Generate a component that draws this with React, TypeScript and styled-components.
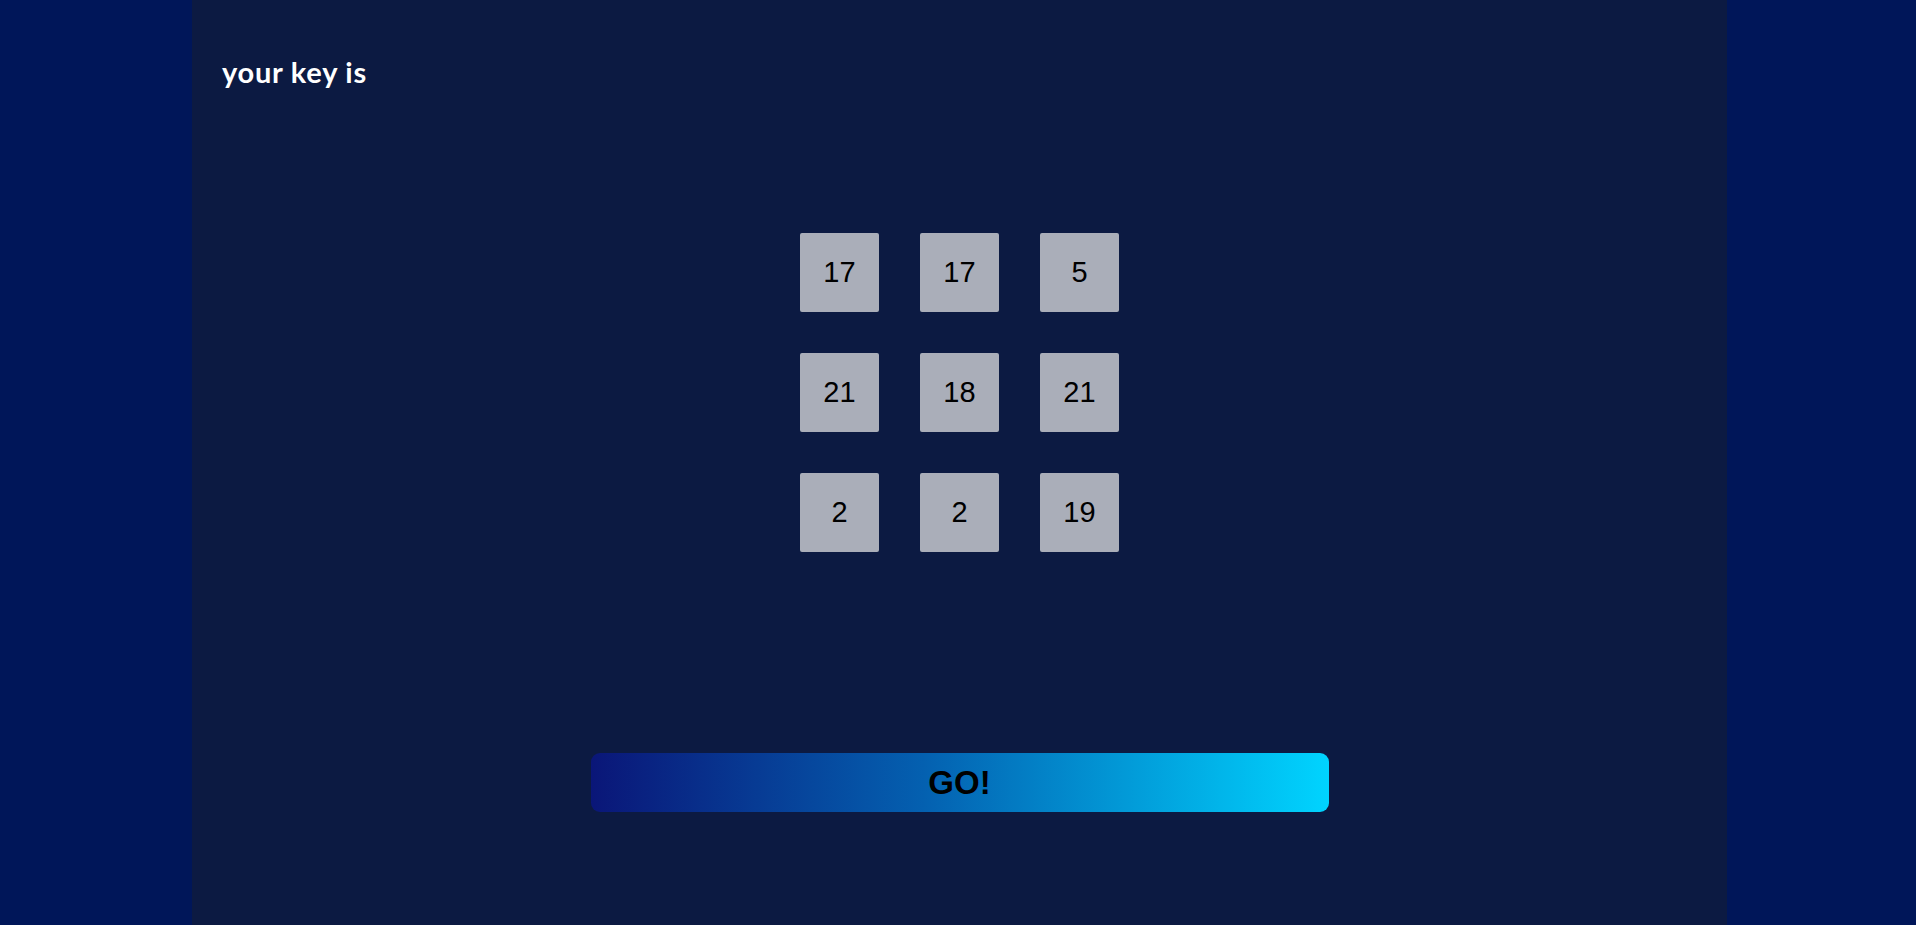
import styled, { createGlobalStyle } from 'styled-components';

const GlobalStyle = createGlobalStyle`
  html, body {
    margin: 0;
    padding: 0;
    background: #001659;
  }
  * {
    box-sizing: border-box;
  }
`;

const keyDigits = [17, 17, 5, 21, 18, 21, 2, 2, 19];

const App = () => {
    return (
        <>
            <GlobalStyle />
            <Page>
                <Panel>
                    <Title>your key is</Title>
                    <KeyGrid>
                        {keyDigits.map((n, i) => <Tile key={i}>{n}</Tile>)}
                    </KeyGrid>
                    <GoButton>GO!</GoButton>
                </Panel>
            </Page>
        </>
    )
}

export default App

const Page = styled.div`
  min-height: 100vh;
  background: #001659;
`;

const Panel = styled.main`
  margin-left: 192px;
  width: 1535px;
  min-height: 100vh;
  background: #0c1a42;
  padding: 56px 30px;
  display: flex;
  flex-direction: column;
`;

const Title = styled.h2`
  margin: 0;
  font-family: Lato, "Open Sans", sans-serif;
  font-weight: 700;
  font-size: 29px;
  line-height: 32px;
  letter-spacing: 0.75px;
  color: #ffffff;
`;

const KeyGrid = styled.section`
  display: grid;
  grid-template-columns: repeat(3, 79px);
  grid-auto-rows: 79px;
  gap: 41px;
  margin: 145px auto 0;
`;

const Tile = styled.div`
  display: flex;
  align-items: center;
  justify-content: center;
  background: #aaaeb9;
  border-radius: 2px;
  font-family: "Liberation Sans", Arial, sans-serif;
  font-size: 29px;
  color: #000000;
`;

const GoButton = styled.button`
  margin: 201px auto 0;
  width: 738px;
  height: 59px;
  border: none;
  border-radius: 9px;
  background: linear-gradient(90deg, #0a1678 0%, #0460b0 45%, #00d4ff 100%);
  font-family: "Liberation Sans", Arial, sans-serif;
  font-weight: 700;
  font-size: 33px;
  color: #000000;
  cursor: pointer;
`;
